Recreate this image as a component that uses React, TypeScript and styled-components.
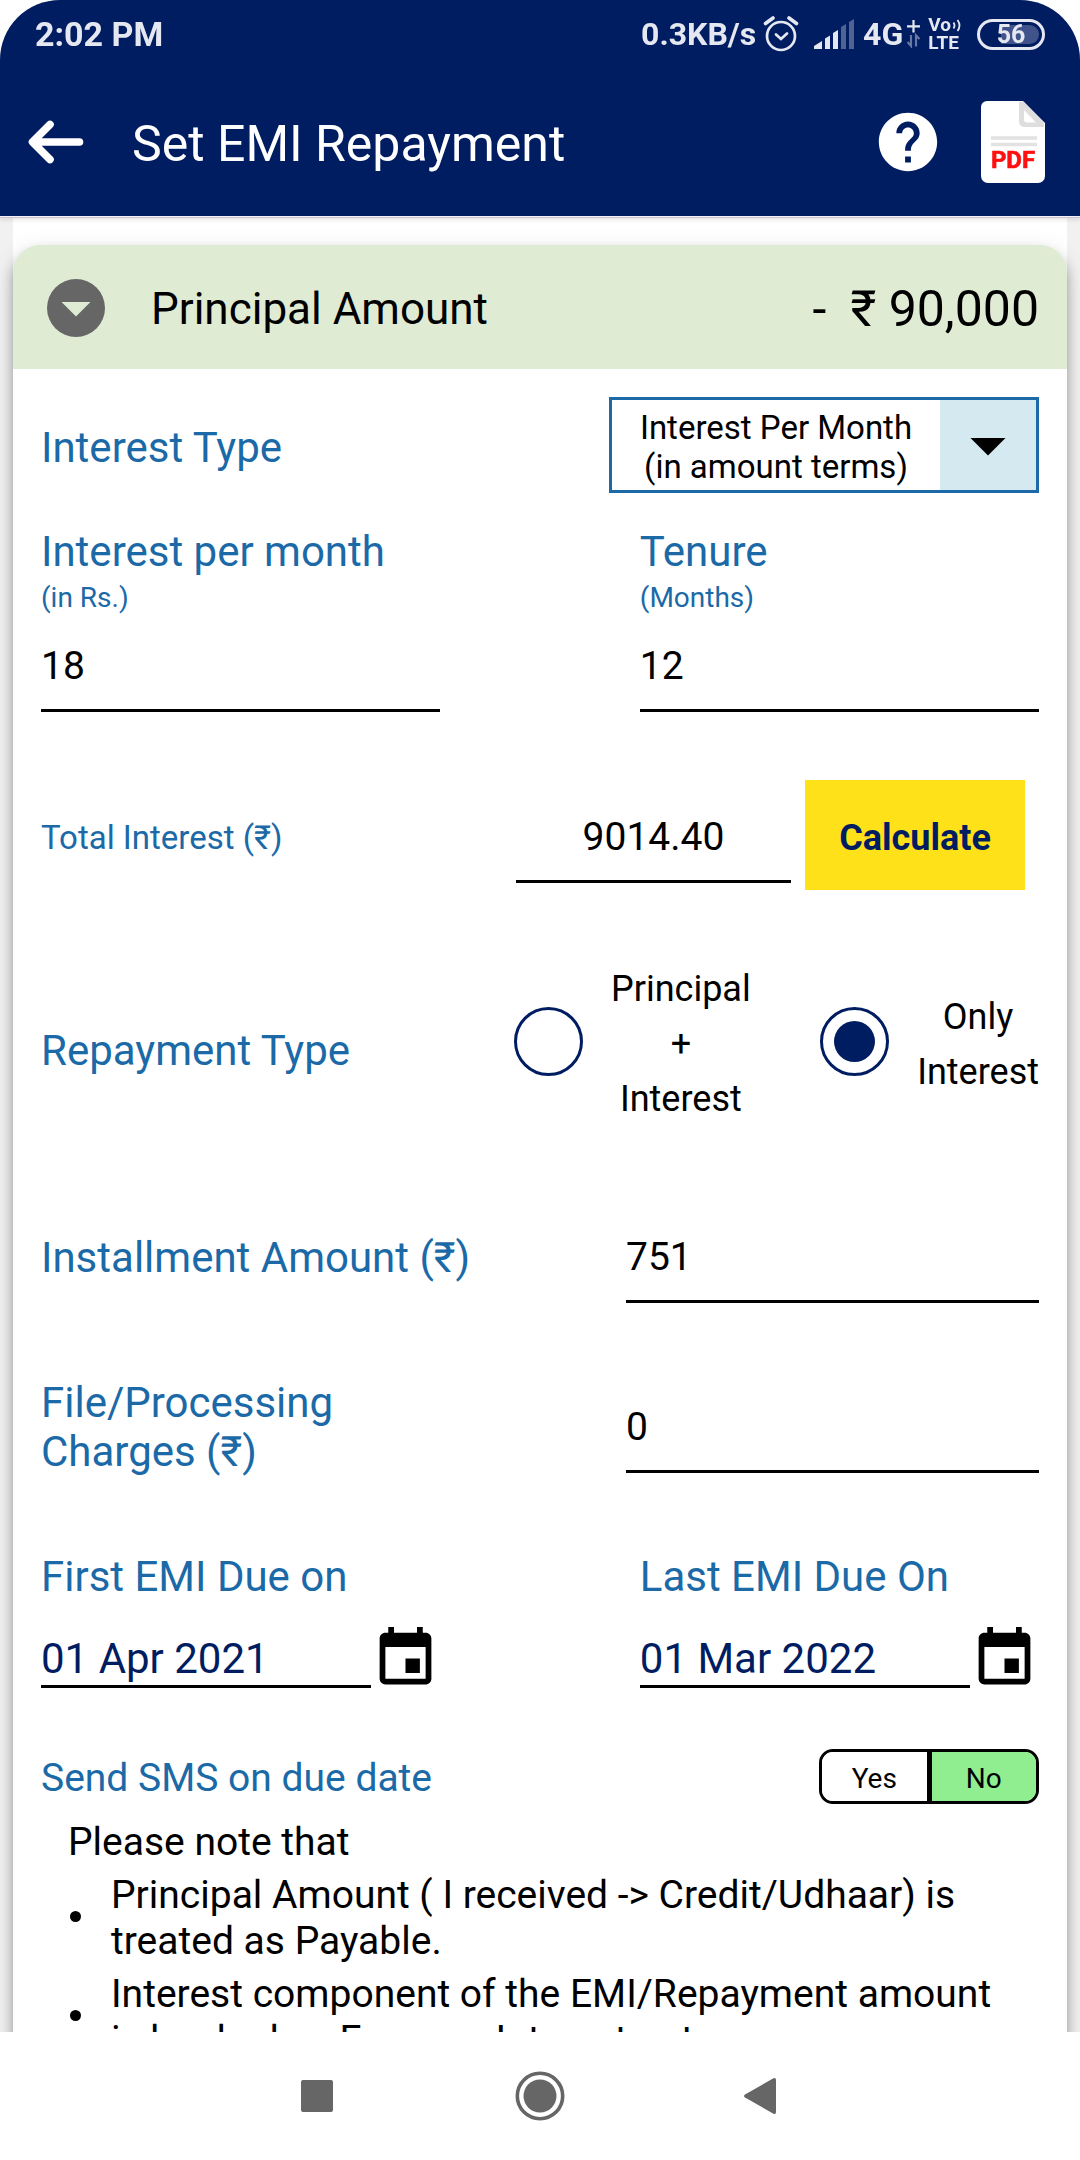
import React, { useState } from "react";
import styled, { createGlobalStyle } from "styled-components";
import { MdArrowDropDown, MdEvent, MdHelp } from "react-icons/md";

const navy = "#001d62";
const blue = "#1b6aa7";
const icon = "#666666";

const GlobalStyle = createGlobalStyle`
  *, *::before, *::after { box-sizing: border-box; }
  body { margin: 0; background: #fff; color: #000; }
  body, input, button, select {
    font-family: Roboto, "Noto Sans", sans-serif;
  }
  button {
    border: 0;
    padding: 0;
    background: none;
    color: inherit;
    cursor: pointer;
  }
  svg { display: block; }
`;

const Screen = styled.div`
  height: 100vh;
  display: flex;
  flex-direction: column;
`;

/* ---------- top bars ---------- */

const TopArea = styled.header`
  position: relative;
  z-index: 1;
  flex: none;
  background: ${navy};
  border-radius: 60px 60px 0 0;
  box-shadow: 0 1px 0 #f3f0f6, 0 2px 0 #cbc3d2, 0 4px 4px rgba(0, 0, 0, 0.1);
`;

const StatusBar = styled.div`
  display: flex;
  align-items: center;
  justify-content: space-between;
  height: 68px;
  padding: 0 35px;
  color: #e6e8f1;
  font-size: 34px;
  line-height: 39px;
  font-weight: 700;
`;

const StatusGroup = styled.div`
  display: flex;
  align-items: center;
  font-size: 32px;
`;

const Spaced = styled.span<{ $left: number }>`
  display: flex;
  margin-left: ${(p) => p.$left}px;
`;

const VoLte = styled.span`
  display: flex;
  flex-direction: column;
  margin-left: 8px;
  font-size: 19px;
  line-height: 18px;
`;

const VoLine = styled.span`
  display: flex;
  align-items: center;
  gap: 1px;
`;

const Battery = styled.span`
  display: flex;
  align-items: center;
  justify-content: center;
  width: 68px;
  height: 31px;
  margin-left: 16px;
  border: 3px solid #e6e8f1;
  border-radius: 16px;
  padding: 3px;
`;

const BatteryFill = styled.span`
  width: 100%;
  height: 19px;
  border-radius: 10px;
  background: linear-gradient(90deg, transparent 32%, #41538b 32%);
  text-align: center;
  font-size: 25px;
  line-height: 20px;
`;

const AppBar = styled.div`
  display: flex;
  align-items: center;
  height: 148px;
  padding: 0 35px 0 28px;
  color: #fff;
`;

const Title = styled.h1`
  flex: 1;
  margin: 4px 0 0 48px;
  font-size: 50px;
  line-height: 58px;
  font-weight: 400;
`;

const BarActions = styled.div`
  display: flex;
  align-items: center;
  gap: 38px;
`;

/* ---------- card ---------- */

const Main = styled.main`
  flex: 1;
  min-height: 0;
  overflow-y: auto;
  scrollbar-width: none;
  padding: 0 13px;
  background: #f1f1f1;
`;

const Page = styled.div`
  padding-top: 29px;
  background: #fff;
`;

const Card = styled.form`
  background: #fff;
  border-radius: 27px 27px 0 0;
  box-shadow: 0 8px 12px rgba(0, 0, 0, 0.3), 0 6px 24px rgba(0, 0, 0, 0.12);
`;

const CardHeader = styled.div`
  display: flex;
  align-items: center;
  height: 124px;
  padding: 2px 28px 0;
  background: #dfebd3;
  border-radius: 27px 27px 0 0;
`;

const Collapse = styled.button`
  color: ${icon};
`;

const CardTitle = styled.h2`
  flex: 1;
  margin: 2px 0 0 40px;
  font-size: 44px;
  line-height: 52px;
  font-weight: 400;
`;

const Amount = styled.div`
  display: flex;
  gap: 24px;
  padding-top: 2px;
  font-size: 50px;
  line-height: 58px;
`;

const CardBody = styled.div`
  display: flex;
  flex-direction: column;
  padding: 28px 28px 40px;
`;

const Row = styled.div<{ $top?: number }>`
  display: flex;
  align-items: center;
  justify-content: space-between;
  margin-top: ${(p) => p.$top ?? 0}px;
`;

const Columns = styled.div<{ $top: number }>`
  display: grid;
  grid-template-columns: 2fr 2fr;
  column-gap: 20%;
  margin-top: ${(p) => p.$top}px;
`;

const Column = styled.div`
  display: flex;
  flex-direction: column;
  gap: 3px;
  min-width: 0;
`;

const Label = styled.label<{ $size?: number }>`
  color: ${blue};
  font-size: ${(p) => p.$size ?? 42}px;
  line-height: 49px;
`;

const RowLabel = styled(Label)`
  padding-top: 4px;
`;

const GroupLabel = styled(Label)`
  padding-top: 12px;
`;

const Hint = styled.span`
  display: block;
  margin-top: 5px;
  font-size: 28px;
  line-height: 33px;
`;

const Input = styled.input<{ $center?: boolean }>`
  width: 100%;
  height: 95px;
  padding: 26px 0 20px;
  border: 0;
  border-bottom: 3px solid #000;
  border-radius: 0;
  background: transparent;
  color: #000;
  font-size: 39px;
  line-height: 46px;
  text-align: ${(p) => (p.$center ? "center" : "left")};
  outline: none;
`;

const InputSlot = styled.div`
  width: 413px;
`;

/* ---------- interest type ---------- */

const Picker = styled.div`
  position: relative;
  display: flex;
  width: 430px;
  height: 96px;
  border: 3px solid ${blue};
`;

const PickerValue = styled.span`
  flex: 1;
  align-self: center;
  padding-top: 4px;
  text-align: center;
  font-size: 33px;
  line-height: 39px;
`;

const PickerArrow = styled.span`
  display: grid;
  place-items: center;
  width: 96px;
  background: #d4eaf0;
`;

const PickerSelect = styled.select`
  position: absolute;
  inset: 0;
  width: 100%;
  opacity: 0;
  font-size: 33px;
`;

/* ---------- total interest ---------- */

const TotalRow = styled.div`
  display: grid;
  grid-template-columns: 1fr 275px 220px;
  align-items: center;
  column-gap: 14px;
  margin-top: 68px;
  padding-right: 14px;
`;

const Calculate = styled.button`
  height: 110px;
  padding-top: 6px;
  background: #ffe11a;
  color: ${navy};
  font-size: 36px;
  line-height: 42px;
  font-weight: 700;
`;

/* ---------- repayment type ---------- */

const Options = styled.div`
  display: flex;
  align-items: center;
  justify-content: space-between;
  width: 525px;
`;

const Option = styled.label`
  display: flex;
  align-items: center;
  gap: 28px;
  text-align: center;
  font-size: 36px;
  line-height: 55px;
`;

const OptionLine = styled.span`
  display: block;
`;

const Radio = styled.input`
  appearance: none;
  display: grid;
  place-content: center;
  flex: none;
  width: 69px;
  height: 69px;
  margin: 0 0 6px;
  border: 3px solid ${navy};
  border-radius: 50%;

  &:checked::before {
    content: "";
    width: 41px;
    height: 41px;
    border-radius: 50%;
    background: ${navy};
  }
`;

/* ---------- dates ---------- */

const DateLine = styled.div`
  display: flex;
  align-items: center;
  margin-top: 20px;
`;

const DateInput = styled.input`
  flex: 1;
  min-width: 0;
  height: 58px;
  padding: 4px 0 2px;
  border: 0;
  border-bottom: 3px solid #000;
  border-radius: 0;
  background: transparent;
  color: ${navy};
  font-size: 42px;
  line-height: 49px;
  outline: none;
`;

/* ---------- sms toggle ---------- */

const Toggle = styled.div`
  display: flex;
  width: 220px;
  height: 55px;
  border: 3px solid #000;
  border-radius: 14px;
  overflow: hidden;
`;

const ToggleItem = styled.label<{ $on: boolean }>`
  flex: 1;
  display: grid;
  place-items: center;
  background: ${(p) => (p.$on ? "#90ee90" : "#fff")};
  font-size: 28px;
  line-height: 33px;
  padding-top: 4px;

  & + & {
    border-left: 5px solid #000;
  }
`;

const HiddenRadio = styled.input`
  position: absolute;
  opacity: 0;
  pointer-events: none;
`;

/* ---------- notes ---------- */

const Notes = styled.section`
  margin-top: 15px;
  padding: 0 28px 0 27px;
  font-size: 39px;
  line-height: 46px;
`;

const NotesTitle = styled.p`
  margin: 0;
`;

const NoteList = styled.ul`
  display: flex;
  flex-direction: column;
  gap: 7px;
  margin: 7px 0 0;
  padding: 0 0 0 2px;
  list-style: none;
`;

const Note = styled.li`
  display: flex;
  align-items: center;
  gap: 30px;

  &::before {
    content: "";
    flex: none;
    width: 11px;
    height: 11px;
    margin-bottom: 3px;
    border-radius: 50%;
    background: #000;
  }
`;

/* ---------- system navigation ---------- */

const NavBar = styled.nav`
  flex: none;
  display: grid;
  grid-template-columns: repeat(3, 1fr);
  place-items: center;
  height: 128px;
  padding: 0 19%;
  background: #fff;
`;

const BackArrow = () => (
  <svg width="56" height="44" viewBox="0 0 56 44" fill="none" stroke="#fff" strokeWidth="7.6" strokeLinecap="round" strokeLinejoin="round">
    <path d="M51.5 22H6M22 4.5 4.5 22 22 39.5" />
  </svg>
);

const PdfIcon = () => (
  <svg width="64" height="82" viewBox="0 0 64 82">
    <path d="M6 0h36l22 22v53a7 7 0 0 1-7 7H7a7 7 0 0 1-7-7V6a6 6 0 0 1 6-6z" fill="#fff" />
    <path d="M38 1h5l20 21v4H43a5 5 0 0 1-5-5z" fill="#dedede" />
    <path d="M43 9l12 12.500H46a3 3 0 0 1-3-3z" fill="#fff" />
    <path d="M10 37h46M10 43.500h46" stroke="#e2e2e2" strokeWidth="3.500" />
    <text x="32" y="67" textAnchor="middle" fontFamily="Roboto, sans-serif" fontWeight="700" fontSize="24" fill="#ff1010" stroke="#ff1010" strokeWidth="0.600">
      PDF
    </text>
  </svg>
);

const CollapseIcon = () => (
  <svg width="70" height="70" viewBox="0 0 70 70">
    <circle cx="35" cy="35" r="29" fill="currentColor" />
    <path d="M20.500 29h29L35 43.500z" fill="#dfebd3" />
  </svg>
);

const AlarmIcon = () => (
  <svg width="36" height="36" viewBox="0 0 36 36" fill="none" stroke="#e6e8f1" strokeWidth="2.700" strokeLinecap="round">
    <circle cx="18" cy="20" r="14" />
    <path d="M2.500 7.500 10 2M33.500 7.500 26 2" strokeWidth="3.600" />
    <path d="M13 18.500l5 4.500 6-5.500" />
  </svg>
);

const SignalIcon = () => (
  <svg width="40" height="30" viewBox="0 0 40 30" fill="#e6e8f1">
    <path d="M0 27l8-5v8H0zM11 19.500l5-3V30h-5zM19 14l5-3v19h-5z" />
    <path d="M27 8l5-3v25h-5zM35 3l5-3v30h-5z" opacity=".35" />
  </svg>
);

const DataIcon = () => (
  <svg width="13" height="28" viewBox="0 0 13 28" fill="none" stroke="#e6e8f1" strokeWidth="2.200">
    <path d="M6.500 0v12.500M0 6.300h13" />
    <path d="M0.500 22l3.500 4V15M12.500 19 9 15.500v11" opacity=".45" />
  </svg>
);

const WaveIcon = () => (
  <svg width="9" height="13" viewBox="0 0 9 13" fill="none" stroke="#e6e8f1" strokeWidth="1.800">
    <path d="M1.500 3.500q2 3 0 6M5.500 1q4 5.500 0 11" />
  </svg>
);

const NavButton = styled.button`
  display: grid;
  place-items: center;
`;

export default function App() {
  const [repayment, setRepayment] = useState("interest");
  const [sms, setSms] = useState("no");

  return (
    <Screen>
      <GlobalStyle />
      <TopArea>
        <StatusBar>
          <span>2:02 PM</span>
          <StatusGroup>
            <span>0.3KB/s</span>
            <Spaced $left={7}><AlarmIcon /></Spaced>
            <Spaced $left={15}><SignalIcon /></Spaced>
            <Spaced $left={9}>4G</Spaced>
            <Spaced $left={4}><DataIcon /></Spaced>
            <VoLte>
              <VoLine>Vo<WaveIcon /></VoLine>
              <span>LTE</span>
            </VoLte>
            <Battery><BatteryFill>56</BatteryFill></Battery>
          </StatusGroup>
        </StatusBar>
        <AppBar>
          <button type="button" aria-label="Back"><BackArrow /></button>
          <Title>Set EMI Repayment</Title>
          <BarActions>
            <button type="button" aria-label="Help"><MdHelp size={70} /></button>
            <button type="button" aria-label="Export as PDF"><PdfIcon /></button>
          </BarActions>
        </AppBar>
      </TopArea>

      <Main>
        <Page>
          <Card onSubmit={(e) => e.preventDefault()}>
            <CardHeader>
              <Collapse type="button" aria-label="Collapse"><CollapseIcon /></Collapse>
              <CardTitle>Principal Amount</CardTitle>
              <Amount>
                <span>-</span>
                <span>₹ 90,000</span>
              </Amount>
            </CardHeader>

            <CardBody>
              <Row>
                <RowLabel htmlFor="interest-type">Interest Type</RowLabel>
                <Picker>
                  <PickerValue>
                    Interest Per Month
                    <br />
                    (in amount terms)
                  </PickerValue>
                  <PickerArrow><MdArrowDropDown size={84} /></PickerArrow>
                  <PickerSelect id="interest-type" defaultValue="amount">
                    <option value="amount">Interest Per Month (in amount terms)</option>
                  </PickerSelect>
                </Picker>
              </Row>

              <Columns $top={34}>
                <Column>
                  <Label htmlFor="interest">
                    Interest per month
                    <Hint>(in Rs.)</Hint>
                  </Label>
                  <Input id="interest" defaultValue="18" inputMode="decimal" />
                </Column>
                <Column>
                  <Label htmlFor="tenure">
                    Tenure
                    <Hint>(Months)</Hint>
                  </Label>
                  <Input id="tenure" defaultValue="12" inputMode="numeric" />
                </Column>
              </Columns>

              <TotalRow>
                <RowLabel htmlFor="total" $size={33}>Total Interest (₹)</RowLabel>
                <Input id="total" defaultValue="9014.40" $center />
                <Calculate type="button">Calculate</Calculate>
              </TotalRow>

              <Row $top={72} role="radiogroup" aria-labelledby="repayment-label">
                <GroupLabel as="span" id="repayment-label">Repayment Type</GroupLabel>
                <Options>
                  <Option>
                    <Radio
                      type="radio"
                      name="repayment"
                      checked={repayment === "both"}
                      onChange={() => setRepayment("both")}
                    />
                    <span>
                      <OptionLine>Principal</OptionLine>
                      <OptionLine>+</OptionLine>
                      <OptionLine>Interest</OptionLine>
                    </span>
                  </Option>
                  <Option>
                    <Radio
                      type="radio"
                      name="repayment"
                      checked={repayment === "interest"}
                      onChange={() => setRepayment("interest")}
                    />
                    <span>
                      <OptionLine>Only</OptionLine>
                      <OptionLine>Interest</OptionLine>
                    </span>
                  </Option>
                </Options>
              </Row>

              <Row $top={81}>
                <RowLabel htmlFor="installment">Installment Amount (₹)</RowLabel>
                <InputSlot><Input id="installment" defaultValue="751" /></InputSlot>
              </Row>

              <Row $top={71}>
                <RowLabel htmlFor="charges">
                  File/Processing
                  <br />
                  Charges (₹)
                </RowLabel>
                <InputSlot><Input id="charges" defaultValue="0" /></InputSlot>
              </Row>

              <Columns $top={76}>
                <Column>
                  <Label htmlFor="first-due">First EMI Due on</Label>
                  <DateLine>
                    <DateInput id="first-due" defaultValue="01 Apr 2021" />
                    <button type="button" aria-label="Pick first due date"><MdEvent size={69} /></button>
                  </DateLine>
                </Column>
                <Column>
                  <Label htmlFor="last-due">Last EMI Due On</Label>
                  <DateLine>
                    <DateInput id="last-due" defaultValue="01 Mar 2022" />
                    <button type="button" aria-label="Pick last due date"><MdEvent size={69} /></button>
                  </DateLine>
                </Column>
              </Columns>

              <Row $top={56} role="radiogroup" aria-labelledby="sms-label">
                <RowLabel as="span" id="sms-label" $size={39}>Send SMS on due date</RowLabel>
                <Toggle>
                  <ToggleItem $on={sms === "yes"}>
                    <HiddenRadio type="radio" name="sms" checked={sms === "yes"} onChange={() => setSms("yes")} />
                    Yes
                  </ToggleItem>
                  <ToggleItem $on={sms === "no"}>
                    <HiddenRadio type="radio" name="sms" checked={sms === "no"} onChange={() => setSms("no")} />
                    No
                  </ToggleItem>
                </Toggle>
              </Row>

              <Notes>
                <NotesTitle>Please note that</NotesTitle>
                <NoteList>
                  <Note>Principal Amount ( I received -&gt; Credit/Udhaar) is treated as Payable.</Note>
                  <Note>Interest component of the EMI/Repayment amount is booked as Expense Interest outgo.</Note>
                </NoteList>
              </Notes>
            </CardBody>
          </Card>
        </Page>
      </Main>

      <NavBar>
        <NavButton type="button" aria-label="Recent apps">
          <svg width="32" height="32" viewBox="0 0 32 32"><rect width="32" height="32" rx="2" fill={icon} /></svg>
        </NavButton>
        <NavButton type="button" aria-label="Home">
          <svg width="50" height="50" viewBox="0 0 50 50">
            <circle cx="25" cy="25" r="22.700" fill="none" stroke={icon} strokeWidth="3.600" />
            <circle cx="25" cy="25" r="16.500" fill={icon} />
          </svg>
        </NavButton>
        <NavButton type="button" aria-label="Back">
          <svg width="38" height="36" viewBox="0 0 38 36">
            <path d="M1 16.500 29 .5q3-1.500 3 1.500v32q0 3-3 1.500L1 19.500q-2-1.500 0-3z" fill={icon} />
          </svg>
        </NavButton>
      </NavBar>
    </Screen>
  );
}
